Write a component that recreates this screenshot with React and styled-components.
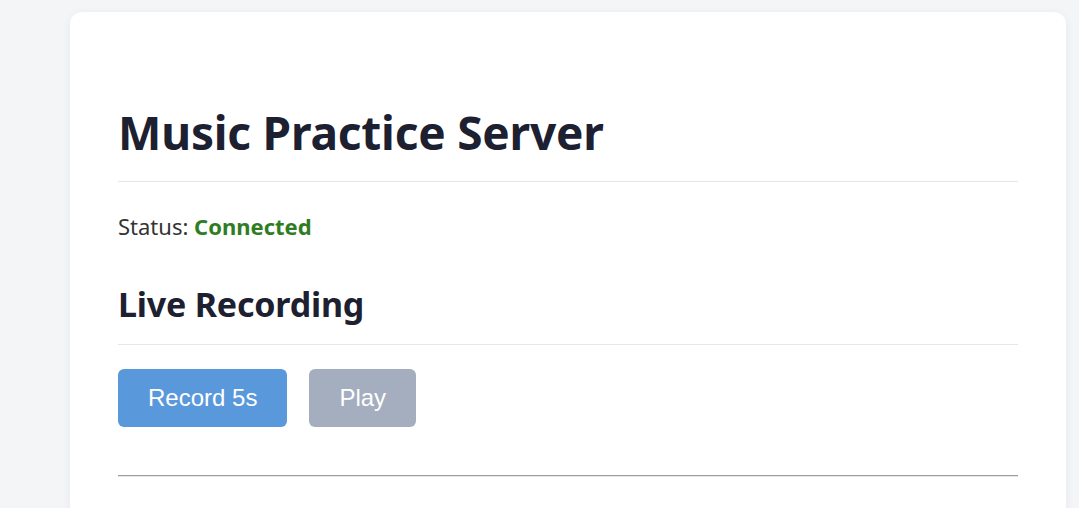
import React from 'react'
import styled, { createGlobalStyle } from 'styled-components'

const GlobalStyle = createGlobalStyle`
    html, body {
        margin: 0;
        padding: 0;
        background: #f4f5f7;
    }
    body {
        font-family: "Noto Sans", "Open Sans", sans-serif;
        color: #1c2030;
    }
`

const Page = styled.div`
    display: flex;
    padding: 12px 13px 0 70px;
    min-height: 508px;
    box-sizing: border-box;
`

const Card = styled.div`
    flex: 1;
    background: #ffffff;
    border-radius: 12px;
    box-shadow: 0 2px 10px rgba(30, 40, 60, 0.06);
    padding: 48px 48px 40px;
`

const Title = styled.h1`
    font-size: 46px;
    line-height: 56px;
    font-weight: 700;
    margin: 44px 0 0;
    color: #1c2030;
    letter-spacing: -0.2px;
`

const Rule = styled.div`
    height: 1px;
    background: ${(p) => p.color || '#e5e7eb'};
    margin-top: ${(p) => p.top}px;
`

const Status = styled.p`
    font-size: 22px;
    line-height: 30px;
    margin: 29px 0 0;
    color: #333;
`

const Connected = styled.strong`
    color: #2f7d23;
    font-weight: 700;
`

const Heading = styled.h2`
    font-size: 34px;
    line-height: 42px;
    font-weight: 700;
    margin: 42px 0 0;
    color: #1c2030;
    letter-spacing: -0.2px;
`

const Controls = styled.div`
    display: flex;
    gap: 22px;
    margin-top: 24px;
`

const Button = styled.button`
    font-family: "Liberation Sans", Arial, sans-serif;
    font-size: 24px;
    line-height: 28px;
    padding: 15px 30px;
    border: none;
    border-radius: 6px;
    color: #ffffff;
    background: ${(p) => (p.disabled ? '#a4aebe' : '#5a98dc')};
    cursor: ${(p) => (p.disabled ? 'default' : 'pointer')};
`

const Divider = styled.hr`
    margin: 48px 0 0;
    border: none;
    border-top: 1px solid #9c9c9c;
    border-bottom: 1px solid #e8e8e8;
`

const App = function () {
    return (
        <>
            <GlobalStyle />
            <Page>
                <Card>
                    <Title>Music Practice Server</Title>
                    <Rule top={21} />
                    <Status>
                        Status: <Connected>Connected</Connected>
                    </Status>
                    <Heading>Live Recording</Heading>
                    <Rule top={19} color="#e2e8f0" />
                    <Controls>
                        <Button>Record 5s</Button>
                        <Button disabled>Play</Button>
                    </Controls>
                    <Divider />
                </Card>
            </Page>
        </>
    )
}

export default App
